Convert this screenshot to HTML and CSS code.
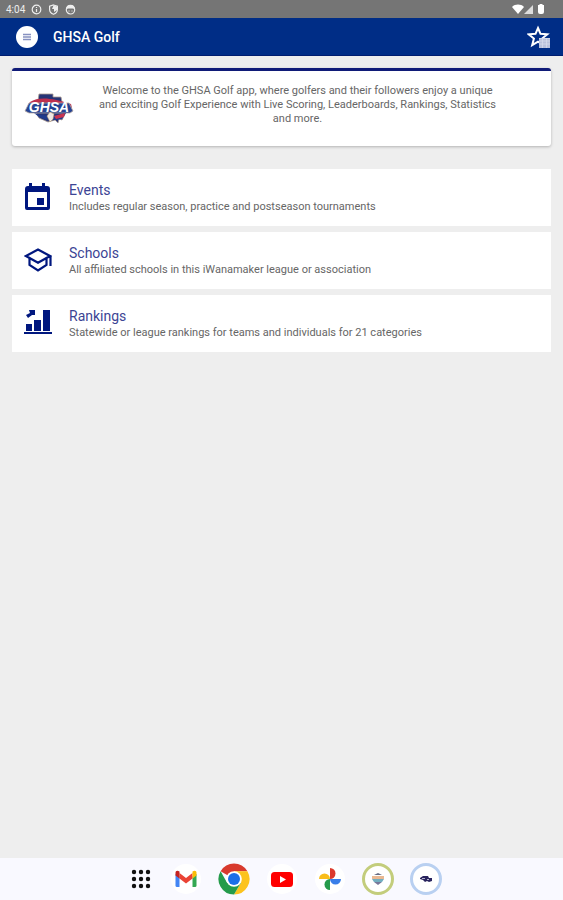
FILE: index.html
```html
<!DOCTYPE html>
<html lang="en">
<head>
    <meta charset="UTF-8">
    <meta name="viewport" content="width=device-width, initial-scale=1.0">
    <title>GHSA Golf</title>
    <link rel="stylesheet" href="styles.css">
</head>
<body>
    <!-- status bar -->
    <div class="status">
        <span class="time">4:04</span>
        <svg width="11" height="11" viewBox="0 0 11 11"><circle cx="5.5" cy="5.5" r="4.3" fill="none" stroke="#eee" stroke-width="1.2"/><path d="M5.5 3v1M5.5 5v3" stroke="#eee" stroke-width="1.2"/></svg>
        <svg width="11" height="11" viewBox="0 0 11 11"><path d="M5.5 1L9.4 2.3V5.5C9.4 8 7.6 9.6 5.5 10.3 3.4 9.6 1.6 8 1.6 5.5V2.3Z" fill="none" stroke="#eee" stroke-width="1.2"/><path d="M5.5 1.5L9 2.5V6L6 8V5H4Z" fill="#eee"/></svg>
        <svg width="11" height="11" viewBox="0 0 11 11"><circle cx="5.5" cy="5.8" r="4.2" fill="none" stroke="#eee" stroke-width="1.2"/><path d="M1 5C1 2.3 3 .8 5.5 .8S10 2.3 10 5L7.5 4.5H3.5Z" fill="#eee"/><path d="M3.5 7h1M6.5 7h1" stroke="#eee"/></svg>
        <svg class="signal" width="34" height="12" viewBox="0 0 34 12"><path d="M0 4C3.2 .8 8.800 .8 12 4L6 11Z" fill="#fff"/><path d="M12 11L21 2V11Z" fill="#ddd"/><path d="M27.500 1h3v1h1.500v7q0 2-2 2h-2q-2 0-2-2V2h1.500Z" fill="#fff"/></svg>
    </div>
    <!-- header -->
    <header class="header">
        <button class="menu" type="button" aria-label="Menu">
            <svg width="10" height="8" viewBox="0 0 10 8"><path d="M1 1.500h8M1 4h8M1 6.500h8" stroke="#8791c0" stroke-width="1.300"/></svg>
        </button>
        <h1>GHSA Golf</h1>
        <button class="star" type="button" aria-label="Favorites">
            <svg width="24" height="24" viewBox="0 0 24 24"><path d="M11 3L13.500 8.800 20.300 9.300 15.100 13.600 16.800 20.200 11 16.600 5.200 20.200 6.900 13.600 1.700 9.300 8.500 8.800Z" fill="none" stroke="#fff" stroke-width="2"/><rect x="12" y="13" width="11" height="10" fill="#b9c1db"/><path d="M12 13.500h11M12 16h11M12 19h11M15.500 13v10M19.500 13v10" stroke="#d5daeb" stroke-width=".8"/></svg>
        </button>
    </header>
    <main class="content">
        <!-- welcome card -->
        <section class="welcome">
            <svg class="logo" width="50" height="34" viewBox="0 0 50 34" role="img" aria-label="GHSA">
                <path d="M15 3H29V6H37L38 11 42 13V21L38 29 35 28 34 32 31 29 24 31 15 27 12 22Z" fill="#263477" stroke="#a99a91" stroke-width=".8"/>
                <path d="M6 11C15 5 29 7 47 13L48 17C31 11 15 10 4 14Z" fill="#be304f"/>
                <path d="M5 12L45 12 49 20 46 22H5L1 20Z" fill="#254393" stroke="#b7aaa2" stroke-width=".8"/>
                <path d="M10 22Q25 28 42 22L38 28Q25 31 15 26Z" fill="#203b8d"/>
                <path d="M30 25L41 22 40 26 32 28Z" fill="#c93450"/>
                <text class="logo-text" x="25" y="21" text-anchor="middle">GHSA</text>
                <path d="M26 21L30 23 29 28 26 31 23 25Z" fill="#efe9e5" stroke="#bc9b67" stroke-width=".5"/>
            </svg>
            <p>Welcome to the GHSA Golf app, where golfers and their followers enjoy a unique and exciting Golf Experience with Live Scoring, Leaderboards, Rankings, Statistics and more.</p>
        </section>
        <!-- main menu -->
        <nav class="list">
            <a class="item" href="#">
                <svg width="28" height="30" viewBox="0 0 28 30"><path d="M5 0h3v3h10V0h3v3h2q3 0 3 3v19q0 2-2 2H3q-2 0-2-2V6q0-3 3-3h1ZM4 9v15h19V9ZM13 15h7v7h-7Z" fill="#00177f" fill-rule="evenodd"/></svg>
                <div>
                    <h2>Events</h2>
                    <p>Includes regular season, practice and postseason tournaments</p>
                </div>
            </a>
            <a class="item" href="#">
                <svg width="28" height="30" viewBox="0 0 28 30"><path d="M2 10L14 3.500 26 10 14 16.800ZM5.500 12.500V19L14 24.500 22.500 19V12.500M26.500 10v10" fill="none" stroke="#00177f" stroke-width="2.200"/></svg>
                <div>
                    <h2>Schools</h2>
                    <p>All affiliated schools in this iWanamaker league or association</p>
                </div>
            </a>
            <a class="item" href="#">
                <svg width="28" height="30" viewBox="0 0 28 30"><path d="M0 23h28v2H0ZM2 15h6v7H2ZM10 11h7v11h-7ZM19 1h7v21h-7ZM5 1h6v5L8 6 4 9 2 6 6 4Z" fill="#00177f"/></svg>
                <div>
                    <h2>Rankings</h2>
                    <p>Statewide or league rankings for teams and individuals for 21 categories</p>
                </div>
            </a>
        </nav>
    </main>
    <!-- dock -->
    <footer class="dock">
        <button type="button" aria-label="All apps">
            <svg width="26" height="32" viewBox="3 0 26 32"><path d="M9 9h.01M16 9h.01M23 9h.01M9 16h.01M16 16h.01M23 16h.01M9 23h.01M16 23h.01M23 23h.01" stroke="#111" stroke-width="4.400" stroke-linecap="round"/></svg>
        </button>
        <button type="button" aria-label="Gmail">
            <svg width="32" height="32" viewBox="0 0 32 32"><circle cx="16" cy="16" r="15" fill="#fff"/><path d="M5.500 11L9.500 13.500V24H7q-1.500 0-1.500-1.500Z" fill="#4285f4"/><path d="M22.500 13.500l4-2.500v11.500q0 1.500-1.500 1.500h-2.500Z" fill="#34a853"/><path d="M9.500 10L16 15l6.500-5v5.500L16 20.500l-6.500-5Z" fill="#ea4335"/><path d="M5.500 10c0-2.500 2-3 4-1.500v7l-4-3Z" fill="#c5221f"/><path d="M26.500 10c0-2.500-2-3-4-1.500v7l4-3Z" fill="#fbbc04"/></svg>
        </button>
        <button type="button" aria-label="Chrome">
            <svg width="32" height="32" viewBox="0 0 32 32"><path d="M16 16L2.600 8.200A15.500 15.500 0 0 1 29.400 8.200H16Z" fill="#d83a2e"/><path d="M16 8.200H29.400A15.500 15.500 0 0 1 16 31.500L22.800 20Z" fill="#fcc31e"/><path d="M2.600 8.200A15.500 15.500 0 0 0 16 31.500L22.800 20H16L9.200 20Z" fill="#259b4b"/><circle cx="16" cy="16" r="7.800" fill="#fff"/><circle cx="16" cy="16" r="6" fill="#1b6fe8"/></svg>
        </button>
        <button type="button" aria-label="YouTube">
            <svg width="32" height="32" viewBox="0 0 32 32"><circle cx="16" cy="16" r="15" fill="#fff"/><rect x="5" y="9" width="22" height="15" rx="3.500" fill="#f00"/><path d="M14 13l6 3.500-6 3.500Z" fill="#fff"/></svg>
        </button>
        <button type="button" aria-label="Photos">
            <svg width="32" height="32" viewBox="0 0 32 32"><circle cx="16" cy="16" r="15" fill="#fff"/><path d="M16 5a5.500 5.500 0 0 1 0 11Z" fill="#dc392d"/><path d="M27 16a5.500 5.500 0 0 1-11 0Z" fill="#397ee9"/><path d="M16 27a5.500 5.500 0 0 1 0-11Z" fill="#259b4b"/><path d="M5 16a5.500 5.500 0 0 1 11 0Z" fill="#f9bd19"/></svg>
        </button>
        <button type="button" aria-label="iWanamaker">
            <svg width="32" height="32" viewBox="0 0 32 32"><circle cx="16" cy="16" r="14.500" fill="#fff" stroke="#c3cd7c" stroke-width="3"/><path d="M12 12l4-2 4 2Z" fill="#666c83"/><path d="M10 13h12v3H10Z" fill="#e9b892"/><path d="M10 16h12l-2 3h-8Z" fill="#72aec0"/><path d="M12 19h8l-4 3Z" fill="#777799"/></svg>
        </button>
        <button type="button" aria-label="GHSA Golf">
            <svg width="32" height="32" viewBox="0 0 32 32"><circle cx="16" cy="16" r="14.500" fill="#fff" stroke="#b9d0f1" stroke-width="3"/><path d="M10 15l3-2h5l1 2h3v3l-3 1-2-1-2 1-2-2-3-1Z" fill="#29245e"/><path d="M12 15.500h3M17 16.500h2" stroke="#b6b4ce"/></svg>
        </button>
    </footer>
</body>
</html>
```
FILE: styles.css
```css
* {
    margin: 0;
    padding: 0;
    box-sizing: border-box;
}
body {
    display: flex;
    flex-direction: column;
    min-height: 100vh;
    background: #eeeeee;
    font-family: Roboto, "Liberation Sans", sans-serif;
}
svg {
    display: block;
    flex-shrink: 0;
}
button {
    border: none;
    background: none;
    cursor: pointer;
}
/* status bar */
.status {
    display: flex;
    align-items: center;
    gap: 6px;
    height: 18px;
    padding: 0 17px 0 6px;
    background: #757575;
    color: #eeeeee;
    font-size: 10px;
}
.signal {
    margin-left: auto;
}
/* header */
.header {
    display: flex;
    align-items: center;
    height: 38px;
    padding: 0 12px 0 16px;
    background: #002d86;
    border-bottom: 1px solid #001d70;
    color: #ffffff;
}
.header h1 {
    margin-left: 15px;
    font-size: 14px;
    font-weight: 500;
}
.menu {
    display: flex;
    align-items: center;
    justify-content: center;
    width: 22px;
    height: 22px;
    border-radius: 50%;
    background: #ffffff;
}
.star {
    margin-left: auto;
}
.content {
    flex: 1;
    padding: 12px;
}
/* welcome card */
.welcome {
    display: flex;
    padding: 13px 50px 20px 12px;
    border-top: 3px solid #101b78;
    border-radius: 3px;
    background: #ffffff;
    box-shadow: 0 1px 3px rgba(0, 0, 0, 0.25);
}
.welcome p {
    flex: 1;
    padding-left: 20px;
    color: #666666;
    font-size: 11px;
    line-height: 14px;
    text-align: center;
}
.logo {
    margin-top: 7px;
}
.logo-text {
    fill: #ffffff;
    font-family: "Liberation Sans", sans-serif;
    font-size: 14px;
    font-weight: bold;
    font-style: italic;
}
/* menu list */
.list {
    display: grid;
    gap: 6px;
    margin-top: 23px;
}
.item {
    display: flex;
    align-items: center;
    gap: 17px;
    height: 57px;
    padding: 0 12px;
    background: #ffffff;
    text-decoration: none;
}
.item h2 {
    color: #3c4494;
    font-size: 14px;
    font-weight: 400;
    line-height: 18px;
}
.item p {
    color: #666666;
    font-size: 11px;
    line-height: 16px;
}
/* dock */
.dock {
    display: flex;
    align-items: center;
    justify-content: center;
    gap: 16px;
    height: 42px;
    padding-left: 6px;
    background: #f9f9ff;
}
```
